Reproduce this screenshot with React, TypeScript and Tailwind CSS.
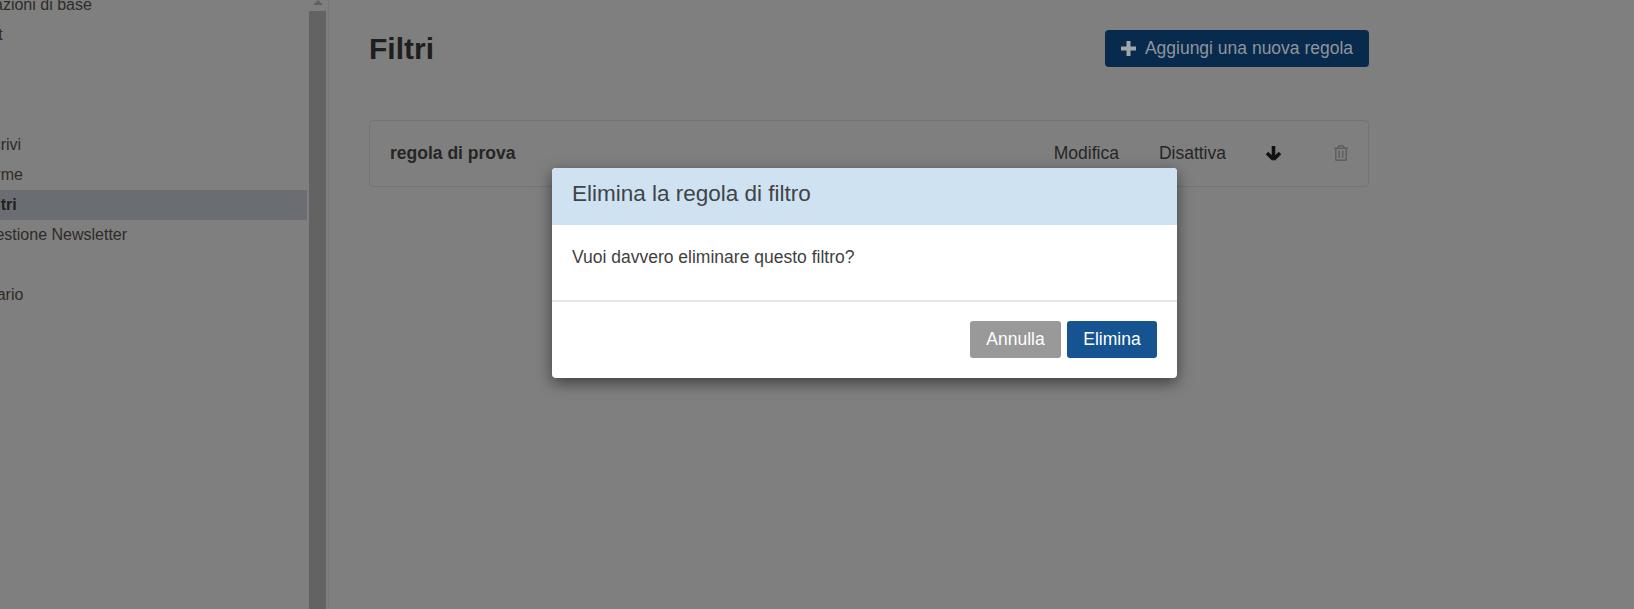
import { FaRegTrashAlt } from "react-icons/fa";

const font = "font-['Liberation_Sans',Arial,sans-serif]";

function Row({ label, indent = "", active = false, extra = "" }: { label: string; indent?: string; active?: boolean; extra?: string }) {
  return (
    <div className={`flex h-[30px] items-center whitespace-nowrap text-[16px] ${active ? "bg-[#6a6d71] font-bold text-[#1f1f1f]" : "text-[#2f2b28]"} ${extra}`}>
      <span className={indent}>{label}</span>
    </div>
  );
}

export default function App() {
  return (
    <div className={`relative flex h-[609px] w-[1634px] overflow-hidden bg-[#7f7f7f] text-[17.5px] ${font}`}>
      <aside className="flex h-full w-[329px] shrink-0 border-r border-[#777777]">
        <nav className="-mt-[10px] w-[307px] shrink-0 overflow-hidden">
          <Row label="Impostazioni di base" indent="-ml-[54px]" />
          <Row label="Account" indent="-ml-[55px]" />
          <Row label="" extra="mb-[50px]" />
          <Row label="Scrivi" indent="-ml-[18px]" />
          <Row label="Firme" indent="-ml-[18px]" />
          <Row label="Filtri" indent="-ml-[18px]" active />
          <Row label="Gestione Newsletter" indent="-ml-[17px]" />
          <Row label="" />
          <Row label="Calendario" indent="-ml-[54px]" />
        </nav>
        <div className="flex w-[21px] flex-col items-center px-[1px]">
          <div className="flex h-[11px] w-full items-start justify-center">
            <div className="h-0 w-0 border-x-[5px] border-b-[5px] border-x-transparent border-b-[#606060]" />
          </div>
          <div className="w-[17px] flex-1 bg-[#636363]" />
        </div>
      </aside>

      <main className="flex-1 pl-[40px] pt-[30px]">
        <div className="w-[1000px]">
          <div className="flex h-[37px] items-center justify-between">
            <h1 className="text-[30px] font-bold text-[#1e1e1e]">Filtri</h1>
            <button className="flex h-[37px] w-[264px] items-center justify-center gap-[9px] rounded-[4px] bg-[#082a4d] text-[#8f959b]">
              <svg width="15" height="15" viewBox="0 0 15 15" className="-mt-[1px]">
                <path d="M5.5 0h4v5.5H15v4H9.5V15h-4V9.5H0v-4h5.5z" fill="#a2a6aa" />
              </svg>
              <span className="-mt-[1px]">Aggiungi una nuova regola</span>
            </button>
          </div>
          <div className="mt-[53px] flex h-[67px] items-center rounded-[4px] border border-[#747474] pb-[1px] pl-[20px] pr-[19px] text-[#262626]">
            <span className="font-bold">regola di prova</span>
            <span className="ml-auto">Modifica</span>
            <span className="ml-[40px]">Disattiva</span>
            <svg width="17" height="16" viewBox="0 0 17 16" className="ml-[39px]">
              <path d="M8.5 14.5L2 8M8.5 14.5L15 8M8.5 14V1" fill="none" stroke="#111111" strokeWidth="3.6" />
            </svg>
            <FaRegTrashAlt className="ml-[51px] text-[16px] text-[#5f5f5f]" />
          </div>
        </div>
      </main>

      <div className="absolute left-[552px] top-[168px] flex w-[625px] flex-col overflow-hidden rounded-[4px] bg-white shadow-[0_5px_15px_rgba(0,0,0,0.5)]">
        <div className="flex h-[57px] items-center bg-[#cfe2f1] px-[20px] pb-[6px] text-[22.5px] text-[#404448]">
          Elimina la regola di filtro
        </div>
        <div className="h-[77px] border-b-2 border-[#e5e5e5] px-[20px] pt-[21px] leading-[22px] text-[#3f3f3f]">
          Vuoi davvero eliminare questo filtro?
        </div>
        <div className="flex h-[76px] items-start justify-end gap-[6px] pr-[20px] pt-[19px]">
          <button className="h-[37px] w-[91px] rounded-[3px] bg-[#999999] text-white">Annulla</button>
          <button className="h-[37px] w-[90px] rounded-[3px] bg-[#155491] text-white">Elimina</button>
        </div>
      </div>
    </div>
  );
}
